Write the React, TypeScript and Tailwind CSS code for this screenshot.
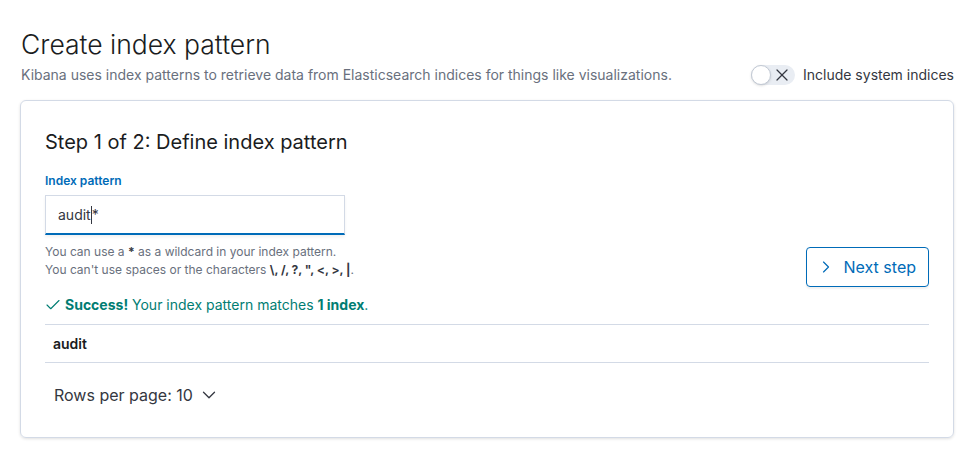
import { Check, ChevronDown, ChevronRight, X } from "lucide-react";

export default function App() {
  return (
    <div className="min-h-[453px] w-[959px] bg-white font-['Inter',sans-serif] text-[#343741]">
      <div className="px-5 pt-[26px]">
        {/* Header */}
        <h1 className="text-[26.5px] leading-[36px] font-light text-[#1a1c21] ml-px">Create index pattern</h1>
        <div className="flex items-center justify-between mt-[2px]">
          <p className="text-sm text-[#69707d] ml-px">
            Kibana uses index patterns to retrieve data from Elasticsearch indices for things like visualizations.
          </p>
          <div className="flex items-center gap-2 -mr-[15px] mt-px">
            <div className="relative w-11 h-5 rounded-full bg-[#e9edf3]">
              <div className="absolute left-0 top-0 w-5 h-5 rounded-full bg-white border border-[#c2c9d4] shadow-sm" />
              <X className="absolute right-[3px] top-0 w-5 h-5 text-[#343741]" strokeWidth={1.5} />
            </div>
            <span className="text-sm text-[#343741]">Include system indices</span>
          </div>
        </div>

        {/* Panel */}
        <div className="mt-[15px] w-[934px] border border-[#d3dae6] rounded-md shadow-[0_1px_3px_rgba(0,0,0,0.12)] px-6 pt-[27px] pb-[30px]">
          <h2 className="text-xl leading-7 font-normal text-[#1a1c21]">Step 1 of 2: Define index pattern</h2>

          <div className="flex items-start justify-between mt-[17px]">
            <div>
              <label className="block text-xs font-semibold text-[#006bb8] leading-4">Index pattern</label>
              <div className="mt-[6px] w-[300px] h-10 bg-white border border-[#d3dae6] border-b-2 border-b-[#006bb8] shadow-[0_2px_3px_rgba(0,0,0,0.06)] flex items-center px-3 text-sm text-[#343741]">
                <span>audit</span>
                <span className="w-px h-[18px] bg-[#343741]" />
                <span>*</span>
              </div>
              <div className="mt-[8px] text-xs leading-[18px] text-[#69707d]">
                <p>You can use a <strong className="font-bold text-[#343741]">*</strong> as a wildcard in your index pattern.</p>
                <p>
                  You can't use spaces or the characters{" "}
                  <strong className="font-bold text-[#343741]">\, /, ?, ", &lt;, &gt;, |</strong>.
                </p>
              </div>
            </div>
            <button className="mt-[74px] flex items-center gap-2 h-10 pl-[9px] pr-[12px] border border-[#006bb8] rounded text-base text-[#006bb8] shadow-[0_2px_2px_rgba(0,0,0,0.06)]">
              <ChevronRight className="w-5 h-5" strokeWidth={1.4} />
              <span>Next step</span>
            </button>
          </div>

          <div className="mt-[8px] -ml-px flex items-center gap-[3px] text-sm text-[#017d73]">
            <Check className="w-[18px] h-[18px]" strokeWidth={1.5} />
            <span>
              <strong className="font-bold">Success!</strong> Your index pattern matches{" "}
              <strong className="font-bold">1 index</strong>.
            </span>
          </div>

          <div className="mt-[9px] border-t border-b border-[#d3dae6] h-[39px] flex items-center px-2 text-sm font-semibold text-[#1a1c21]">
            audit
          </div>

          <div className="mt-[20px] flex items-center gap-[5px] px-[9px] text-base text-[#343741]">
            <span>Rows per page: 10</span>
            <ChevronDown className="w-[22px] h-[22px]" strokeWidth={1.4} />
          </div>
        </div>
      </div>
    </div>
  );
}
